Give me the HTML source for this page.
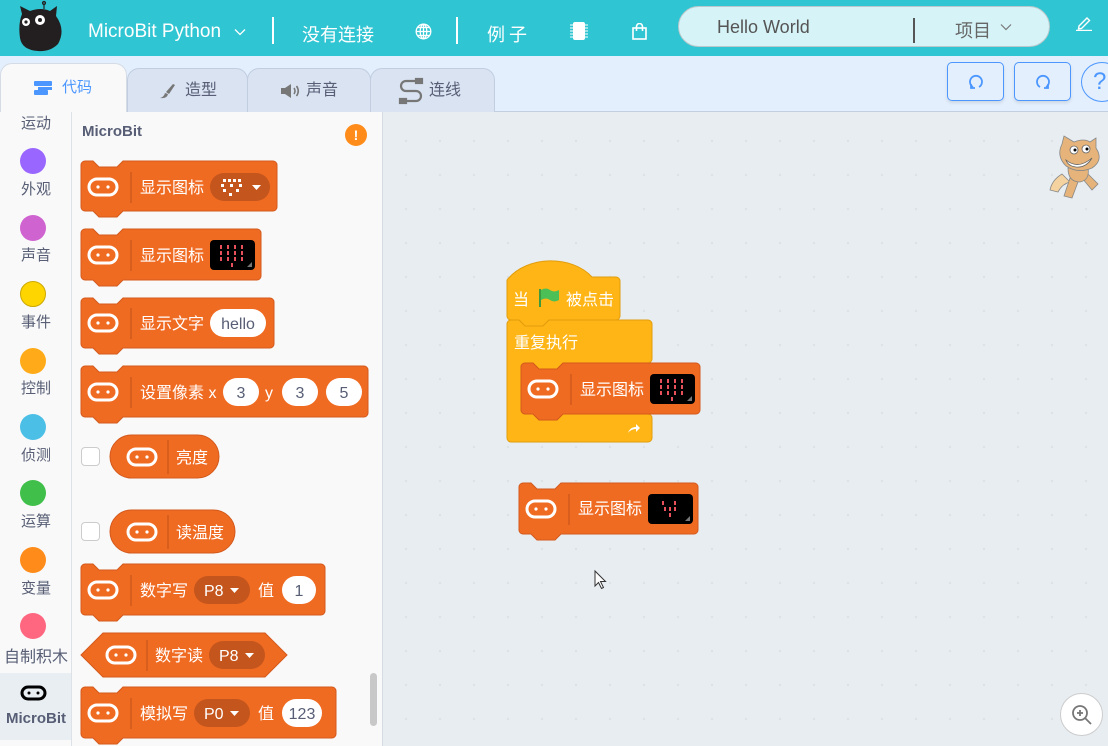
<!DOCTYPE html>
<html><head><meta charset="utf-8"><style>
*{margin:0;padding:0;box-sizing:border-box}
body{width:1108px;height:746px;overflow:hidden;position:relative;font-family:"Liberation Sans","Noto Sans CJK SC",sans-serif;background:#e8edf1}
.a{position:absolute}
#hdr{left:0;top:0;width:1108px;height:56px;background:#30c5d2;color:#fff}
#tabs{left:0;top:56px;width:1108px;height:56px;background:#e3effd;border-bottom:1px solid #c3cfe0}
.tab{position:absolute;top:12px;height:44px;background:#d9e3f2;border:1px solid #c2cde0;border-bottom:none;border-radius:12px 12px 0 0;color:#575e75;font-size:15px;line-height:42px}
#cats{left:0;top:112px;width:72px;height:634px;background:#f9f9f9;border-right:1px solid #dde2e8}
#pal{left:72px;top:112px;width:311px;height:634px;background:#f9f9f9;border-right:1px solid #d5dbe2}
#canvas{left:383px;top:112px;width:725px;height:634px;background-color:#e8edf1;background-image:radial-gradient(circle,#dde2e7 1.1px,transparent 1.4px);background-size:34px 34px;background-position:6px 12px}
.cl{position:absolute;left:0;width:72px;text-align:center;font-size:15px;color:#575e75}
.cc{position:absolute;left:20px;width:26px;height:26px;border-radius:50%}
.btn{position:absolute;top:62px;height:39px;border:1.5px solid #4c97ff;border-radius:5px;background:#e3effd;box-shadow:0 2px 3px rgba(0,0,0,.1)}
</style></head><body>

<div id="hdr" class="a">
  <svg class="a" style="left:14px;top:0" width="50" height="54" viewBox="0 0 50 54">
    <line x1="30" y1="2" x2="30" y2="9" stroke="#222" stroke-width="1.2"/><circle cx="30" cy="3" r="1.6" fill="none" stroke="#222"/>
    <path d="M8 14 L6 6 L16 11 Q27 7 36 11 L43 6 L42 16 Q52 30 44 44 Q36 52 24 51 Q8 50 6 38 Q4 24 8 14Z" fill="#231f20"/>
    <circle cx="12" cy="22" r="4" fill="#fff"/><circle cx="26" cy="20" r="5" fill="#fff"/><circle cx="12" cy="22" r="1.6" fill="#222"/><circle cx="26" cy="20" r="2" fill="#222"/>
  </svg>
  <div class="a" style="left:88px;top:21px;font-size:19px">MicroBit Python</div>
  <svg class="a" style="left:234px;top:28px" width="12" height="8" viewBox="0 0 12 8" fill="none" stroke="#fff" stroke-width="1.3"><path d="M1 1.5l5 5 5-5"/></svg>
  <div class="a" style="left:272px;top:17px;width:2px;height:27px;background:#fff"></div>
  <div class="a" style="left:302px;top:21px;font-size:18px">没有连接</div>
  <svg class="a" style="left:415px;top:23px" width="17" height="17" viewBox="0 0 17 17" fill="none" stroke="#fff" stroke-width="1.3"><circle cx="8.5" cy="8.5" r="7.3"/><ellipse cx="8.5" cy="8.5" rx="3.3" ry="7.3"/><line x1="1.2" y1="8.5" x2="15.8" y2="8.5"/><line x1="8.5" y1="1.2" x2="8.5" y2="15.8"/><line x1="2.5" y1="4.5" x2="14.5" y2="4.5"/><line x1="2.5" y1="12.5" x2="14.5" y2="12.5"/></svg>
  <div class="a" style="left:456px;top:17px;width:2px;height:27px;background:#fff"></div>
  <div class="a" style="left:487px;top:21px;font-size:18px;letter-spacing:4px">例子</div>
  <svg class="a" style="left:569px;top:21px" width="20" height="20" viewBox="0 0 20 20"><rect x="4" y="1" width="12" height="18" rx="2" fill="#fff"/><g stroke="#fff" stroke-width="1"><line x1="1" y1="4" x2="4" y2="4"/><line x1="1" y1="7" x2="4" y2="7"/><line x1="1" y1="10" x2="4" y2="10"/><line x1="1" y1="13" x2="4" y2="13"/><line x1="1" y1="16" x2="4" y2="16"/><line x1="16" y1="4" x2="19" y2="4"/><line x1="16" y1="7" x2="19" y2="7"/><line x1="16" y1="10" x2="19" y2="10"/><line x1="16" y1="13" x2="19" y2="13"/><line x1="16" y1="16" x2="19" y2="16"/></g></svg>
  <svg class="a" style="left:631px;top:23px" width="18" height="17" viewBox="0 0 18 17" fill="none" stroke="#fff" stroke-width="1.6"><rect x="2" y="5" width="13" height="11"/><path d="M5.5 8V3.5a3 3 0 0 1 6 0V8"/></svg>
  <div class="a" style="left:678px;top:6px;width:372px;height:41px;border-radius:21px;background:#d6f3f7;border:1px solid #b9c8cc"></div>
  <div class="a" style="left:717px;top:17px;font-size:18px;color:#555">Hello World</div>
  <div class="a" style="left:913px;top:18px;width:2px;height:25px;background:#555"></div>
  <div class="a" style="left:955px;top:17px;font-size:18px;color:#666">项目</div>
  <svg class="a" style="left:1000px;top:23px" width="12" height="8" viewBox="0 0 12 8" fill="none" stroke="#777" stroke-width="1.2"><path d="M1 1.5l5 5 5-5"/></svg>
  <svg class="a" style="left:1075px;top:15px" width="18" height="16" viewBox="0 0 18 16" fill="none" stroke="#fff" stroke-width="1.4"><path d="M4 11 L12 3 L14.5 5.5 L6.5 13.5 L3.5 14Z"/><line x1="1" y1="15.5" x2="17" y2="15.5"/></svg>
</div>

<div id="tabs" class="a">
  <div class="tab" style="left:127px;width:121px"><svg class="a" style="left:30px;top:13px" width="18" height="18" viewBox="0 0 18 18"><path d="M2 16 Q6 15 7 11 L10 12 Q9 17 2 16Z M8 10 L15 2 L17 3 L11 12Z" fill="#777"/></svg><span class="a" style="left:57px;top:1px;font-size:16px">造型</span></div>
  <div class="tab" style="left:247px;width:124px"><svg class="a" style="left:32px;top:14px" width="20" height="16" viewBox="0 0 20 16"><path d="M1 5h4l6-4v14l-6-4H1z" fill="#777"/><path d="M14 5q2 3 0 6M16.5 3q3.5 5 0 10" stroke="#777" stroke-width="1.6" fill="none"/></svg><span class="a" style="left:58px;top:1px;font-size:16px">声音</span></div>
  <div class="tab" style="left:370px;width:125px"><svg class="a" style="left:26px;top:8px" width="28" height="28" viewBox="0 0 28 28" fill="none" stroke="#777" stroke-width="2.2"><path d="M20 4H9a5 5 0 0 0 0 10h10a5 5 0 0 1 0 10H8"/><rect x="19" y="2" width="6" height="4" fill="#777"/><rect x="3" y="22" width="6" height="4" fill="#777"/></svg><span class="a" style="left:58px;top:1px;font-size:16px">连线</span></div>
  <div class="tab" style="left:0;top:7px;height:50px;width:127px;background:#f9f9f9;color:#4c97ff;border-color:#d5dce6"><svg class="a" style="left:33px;top:17px" width="18" height="14" viewBox="0 0 18 14"><rect x="0" y="0" width="18" height="5" rx="1" fill="#4c97ff"/><rect x="4" y="6" width="14" height="3" fill="#4c97ff"/><rect x="0" y="9" width="14" height="5" rx="1" fill="#4c97ff"/></svg><span class="a" style="left:61px;top:3px">代码</span></div>
  <div class="btn" style="left:947px;width:57px;top:6px"><svg class="a" style="left:19px;top:10px" width="18" height="18" viewBox="0 0 18 18" fill="none" stroke="#4c97ff" stroke-width="1.8"><path d="M6 14a6 6 0 1 1 6 0"/><path d="M4 11v4h4" /></svg></div>
  <div class="btn" style="left:1014px;width:57px;top:6px"><svg class="a" style="left:19px;top:10px" width="18" height="18" viewBox="0 0 18 18" fill="none" stroke="#4c97ff" stroke-width="1.8"><path d="M6 14a6 6 0 1 1 6 0"/><path d="M14 11v4h-4"/></svg></div>
  <div class="a" style="left:1081px;top:6px;width:42px;height:40px;border-radius:50%;border:1.5px solid #4c97ff;color:#4c97ff;font-size:24px;line-height:37px;padding-left:11px">?</div>
</div>

<div id="cats" class="a">
  <div class="cl" style="top:0">运动</div>
  <div class="cc" style="top:36px;background:#9966ff"></div><div class="cl" style="top:66px">外观</div>
  <div class="cc" style="top:103px;background:#cf63cf"></div><div class="cl" style="top:132px">声音</div>
  <div class="cc" style="top:169px;background:#ffd500;border:1px solid #cca800"></div><div class="cl" style="top:199px">事件</div>
  <div class="cc" style="top:236px;background:#ffab19"></div><div class="cl" style="top:265px">控制</div>
  <div class="cc" style="top:302px;background:#4cbfe6"></div><div class="cl" style="top:332px">侦测</div>
  <div class="cc" style="top:368px;background:#40bf4a"></div><div class="cl" style="top:398px">运算</div>
  <div class="cc" style="top:435px;background:#ff8c1a"></div><div class="cl" style="top:465px">变量</div>
  <div class="cc" style="top:501px;background:#ff6680"></div><div class="cl" style="top:531px;font-size:16px">自制积木</div>
  <div class="a" style="left:0;top:561px;width:71px;height:67px;background:#e9eef2"></div>
  <svg class="a" style="left:20px;top:573px" width="27" height="16" viewBox="0 0 27 16"><rect x="2" y="2" width="23" height="12" rx="6" fill="none" stroke="#000" stroke-width="3"/><circle cx="9" cy="8" r="1.5"/><circle cx="18" cy="8" r="1.5"/></svg>
  <div class="cl" style="top:598px;font-weight:bold;font-size:15px">MicroBit</div>
</div>

<div id="pal" class="a">
  <div class="a" style="left:10px;top:11px;font-size:15px;font-weight:bold;color:#575e75">MicroBit</div>
  <div class="a" style="left:273px;top:12px;width:22px;height:22px;border-radius:50%;background:#ff8c1a;color:#fff;font-weight:bold;text-align:center;font-size:14px;line-height:22px">!</div>
  <div class="a" style="left:9px;top:335px;width:19px;height:19px;border:1px solid #ccc;border-radius:4px;background:#fff"></div>
  <div class="a" style="left:9px;top:410px;width:19px;height:19px;border:1px solid #ccc;border-radius:4px;background:#fff"></div>
  <div class="a" style="left:298px;top:561px;width:7px;height:53px;border-radius:4px;background:#c8c8c8"></div>
</div>

<div id="canvas" class="a">
  <svg class="a" style="left:665px;top:22px" width="58" height="66" viewBox="0 0 58 66">
    <path d="M14 40 Q4 46 2 56 L10 58 Q14 50 22 48Z" fill="#f5d3a0" stroke="#888" stroke-width=".8"/>
    <path d="M22 44 L16 62 L24 64 L30 48Z M34 44 L44 56 L50 50 L40 40Z" fill="#e6b47a" stroke="#888" stroke-width=".8"/>
    <path d="M20 34 Q20 48 32 48 Q42 46 40 34Z" fill="#e6b47a" stroke="#888" stroke-width=".8"/>
    <path d="M14 10 L16 2 L26 8 Q36 4 42 8 L48 4 L48 14 Q56 26 44 34 Q30 40 18 32 Q8 22 14 10Z" fill="#e6b47a" stroke="#888" stroke-width=".8"/>
    <path d="M18 26 Q30 36 44 24 Q38 34 28 33 Q20 32 18 26Z" fill="#fff" stroke="#666" stroke-width=".8"/>
    <circle cx="26" cy="16" r="4" fill="#fff" stroke="#666" stroke-width=".8"/><circle cx="38" cy="15" r="4" fill="#fff" stroke="#666" stroke-width=".8"/>
    <circle cx="27" cy="16" r="1.5"/><circle cx="39" cy="15" r="1.5"/>
  </svg>
  <div class="a" style="left:677px;top:581px;width:43px;height:43px;border-radius:50%;background:#fff;border:1px solid #ccc"><svg class="a" style="left:10px;top:10px" width="22" height="22" viewBox="0 0 22 22" fill="none" stroke="#777" stroke-width="1.8"><circle cx="9" cy="9" r="7"/><line x1="14" y1="14" x2="20" y2="20"/><line x1="6" y1="9" x2="12" y2="9"/><line x1="9" y1="6" x2="9" y2="12"/></svg></div>
</div>

<svg class="a" style="left:0;top:0" width="1108" height="746" viewBox="0 0 1108 746" font-family="Liberation Sans,Noto Sans CJK SC,sans-serif" font-size="16">
<defs>
  <g id="mb"><rect x="-14" y="-8" width="28" height="16" rx="8" fill="none" stroke="#fff" stroke-width="3"/><circle cx="-5" cy="0" r="1.6" fill="#fff"/><circle cx="5" cy="0" r="1.6" fill="#fff"/></g>
  <g id="led"><rect x="0" y="0" width="45" height="30" rx="4" fill="#000"/><g fill="#e8505b"><rect x="10" y="5" width="2" height="4"/><rect x="17" y="5" width="2" height="4"/><rect x="24" y="5" width="2" height="4"/><rect x="31" y="5" width="2" height="4"/><rect x="10" y="11" width="2" height="4"/><rect x="17" y="11" width="2" height="4"/><rect x="24" y="11" width="2" height="4"/><rect x="31" y="11" width="2" height="4"/><rect x="10" y="17" width="2" height="4"/><rect x="17" y="17" width="2" height="4"/><rect x="24" y="17" width="2" height="4"/><rect x="31" y="17" width="2" height="4"/><rect x="21" y="23" width="2" height="4"/></g><path d="M37 27h5v-5z" fill="#777"/></g>
  <g id="led2"><rect x="0" y="0" width="45" height="30" rx="4" fill="#000"/><g fill="#e8505b"><rect x="14" y="7" width="2" height="4"/><rect x="26" y="7" width="2" height="4"/><rect x="16" y="13" width="2" height="4"/><rect x="21" y="13" width="2" height="4"/><rect x="26" y="13" width="2" height="4"/><rect x="21" y="19" width="2" height="4"/></g><path d="M37 27h5v-5z" fill="#777"/></g>
</defs>
<g fill="#f06b22" stroke="#d3591c" stroke-width="1">
<path d="M81 165a4 4 0 0 1 4-4h8l6 6h18l6-6H273a4 4 0 0 1 4 4V207a4 4 0 0 1-4 4H123l-6 6h-18l-6-6H85a4 4 0 0 1-4-4z"/>
<path d="M81 233a4 4 0 0 1 4-4h8l6 6h18l6-6H257a4 4 0 0 1 4 4V276a4 4 0 0 1-4 4H123l-6 6h-18l-6-6H85a4 4 0 0 1-4-4z"/>
<path d="M81 302a4 4 0 0 1 4-4h8l6 6h18l6-6H270a4 4 0 0 1 4 4V344a4 4 0 0 1-4 4H123l-6 6h-18l-6-6H85a4 4 0 0 1-4-4z"/>
<path d="M81 370a4 4 0 0 1 4-4h8l6 6h18l6-6H364a4 4 0 0 1 4 4V413a4 4 0 0 1-4 4H123l-6 6h-18l-6-6H85a4 4 0 0 1-4-4z"/>
<rect x="110" y="435" width="109" height="43" rx="21.5"/>
<rect x="110" y="510" width="125" height="43" rx="21.5"/>
<path d="M81 568a4 4 0 0 1 4-4h8l6 6h18l6-6H321a4 4 0 0 1 4 4V611a4 4 0 0 1-4 4H123l-6 6h-18l-6-6H85a4 4 0 0 1-4-4z"/>
<path d="M81 655L103 633H265L287 655L265 677H103Z"/>
<path d="M81 691a4 4 0 0 1 4-4h8l6 6h18l6-6H332a4 4 0 0 1 4 4V734a4 4 0 0 1-4 4H123l-6 6h-18l-6-6H85a4 4 0 0 1-4-4z"/>
</g>
<g fill="#ffb515" stroke="#e19d0d">
<path d="M507 280c20-25 65-25 85-3H616a4 4 0 0 1 4 4V316a4 4 0 0 1-4 4H549l-6 6h-18l-6-6H511a4 4 0 0 1-4-4z"/>
<path d="M507 324a4 4 0 0 1 4-4h8l6 6h18l6-6H648a4 4 0 0 1 4 4V359a4 4 0 0 1-4 4H563l-6 6h-18l-6-6H525a4 4 0 0 0-4 4V410a4 4 0 0 0 4 4h8l6 6h18l6-6H648a4 4 0 0 1 4 4V438a4 4 0 0 1-4 4H511a4 4 0 0 1-4-4z"/>
</g>
<g fill="#f06b22" stroke="#d3591c">
<path d="M521 367a4 4 0 0 1 4-4h8l6 6h18l6-6H696a4 4 0 0 1 4 4V410a4 4 0 0 1-4 4H563l-6 6h-18l-6-6H525a4 4 0 0 1-4-4z"/>
<path d="M519 487a4 4 0 0 1 4-4h8l6 6h18l6-6H694a4 4 0 0 1 4 4V530a4 4 0 0 1-4 4H561l-6 6h-18l-6-6H523a4 4 0 0 1-4-4z"/>
</g>
<g stroke="#c9561b" stroke-width="1.2">
<line x1="131" y1="172" x2="131" y2="203"/><line x1="131" y1="240" x2="131" y2="271"/><line x1="131" y1="308" x2="131" y2="339"/><line x1="131" y1="377" x2="131" y2="408"/>
<line x1="168" y1="440" x2="168" y2="474"/><line x1="168" y1="515" x2="168" y2="549"/><line x1="131" y1="575" x2="131" y2="606"/><line x1="147" y1="640" x2="147" y2="671"/><line x1="131" y1="698" x2="131" y2="729"/>
<line x1="571" y1="374" x2="571" y2="405"/><line x1="569" y1="494" x2="569" y2="525"/>
</g>
<use href="#mb" x="103" y="187"/><use href="#mb" x="103" y="255"/><use href="#mb" x="103" y="323"/><use href="#mb" x="103" y="392"/>
<use href="#mb" x="142" y="457"/><use href="#mb" x="142" y="532"/><use href="#mb" x="103" y="590"/><use href="#mb" x="121" y="655"/><use href="#mb" x="103" y="713"/>
<use href="#mb" x="543" y="389"/><use href="#mb" x="541" y="509"/>
<g fill="#c4551c"><rect x="210" y="173" width="60" height="28" rx="14"/><rect x="194" y="576" width="56" height="28" rx="14"/><rect x="209" y="641" width="56" height="28" rx="14"/><rect x="194" y="699" width="56" height="28" rx="14"/></g>
<g fill="#fff">
<rect x="223" y="179" width="3" height="3"/><rect x="228" y="179" width="3" height="3"/><rect x="233" y="179" width="3" height="3"/><rect x="238" y="179" width="3" height="3"/>
<rect x="221" y="184" width="3" height="3"/><rect x="230" y="184" width="3" height="3"/><rect x="239" y="184" width="3" height="3"/>
<rect x="223" y="189" width="3" height="3"/><rect x="236" y="189" width="3" height="3"/><rect x="229" y="193" width="3" height="3"/>
<path d="M252 185h9l-4.5 5z"/><path d="M230 588h9l-4.5 5z"/><path d="M245 653h9l-4.5 5z"/><path d="M230 711h9l-4.5 5z"/>
<rect x="210" y="309" width="56" height="28" rx="14"/><rect x="223" y="378" width="36" height="28" rx="14"/><rect x="282" y="378" width="36" height="28" rx="14"/><rect x="326" y="378" width="36" height="28" rx="14"/>
<rect x="282" y="576" width="34" height="28" rx="14"/><rect x="282" y="699" width="40" height="28" rx="14"/></g>
<use href="#led" x="210" y="240"/><use href="#led" x="650" y="374"/><use href="#led2" x="648" y="494"/>
<g fill="#fff">
<text x="140" y="193">显示图标</text><text x="140" y="261">显示图标</text><text x="140" y="329">显示文字</text><text x="140" y="398">设置像素 x</text><text x="265" y="398">y</text>
<text x="176" y="463">亮度</text><text x="176" y="538">读温度</text>
<text x="140" y="596">数字写</text><text x="204" y="596">P8</text><text x="258" y="596">值</text>
<text x="155" y="661">数字读</text><text x="219" y="661">P8</text>
<text x="140" y="719">模拟写</text><text x="204" y="719">P0</text><text x="258" y="719">值</text>
<text x="513" y="305">当</text><text x="566" y="305">被点击</text><text x="514" y="348">重复执行</text>
<text x="580" y="395">显示图标</text><text x="578" y="514">显示图标</text>
</g>
<g fill="#575e75" text-anchor="middle" font-size="16"><text x="238" y="329">hello</text><text x="241" y="398">3</text><text x="300" y="398">3</text><text x="344" y="398">5</text><text x="299" y="596">1</text><text x="302" y="719">123</text></g>
<path d="M540 289v18" stroke="#3e9a3e" stroke-width="2"/><path d="M541 290q5-3 9 0t9 0v10q-5 3-9 0t-9 0z" fill="#4cbf56"/>
<path d="M628 433q2-6 8-6v-3l4 4-4 4v-3q-5 0-8 4z" fill="#fff"/>
<path d="M595 571v15l3.5-3.5 3 6 2-1-3-6h5z" fill="#fff" stroke="#333" stroke-width="1"/>
</svg>
</body></html>
